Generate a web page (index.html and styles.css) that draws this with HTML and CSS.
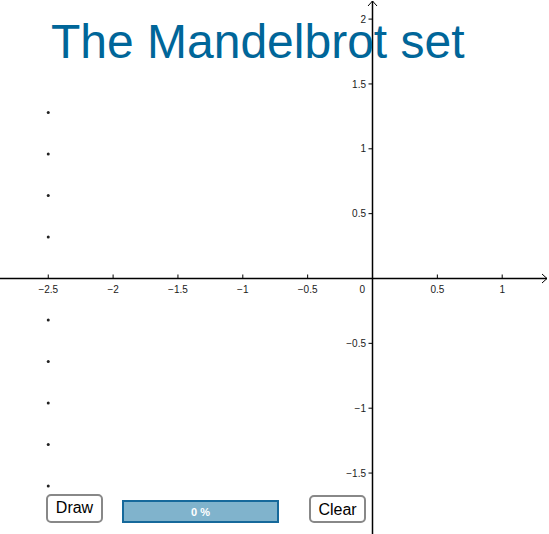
FILE: index.html
```html
<!DOCTYPE html>
<html>
<head>
<meta charset="utf-8">
<title>The Mandelbrot set</title>
<link rel="stylesheet" href="styles.css">
</head>
<body>
<div class="canvas">
  <svg class="graph" width="549" height="534" viewBox="0 0 549 534" xmlns="http://www.w3.org/2000/svg">
    <g class="axis" stroke="#000" stroke-width="1.5" fill="none">
      <line x1="0" y1="278.5" x2="547" y2="278.5"/>
      <polyline points="542,274 547,278.5 542,283" stroke-width="1"/>
      <line x1="372.5" y1="534" x2="372.5" y2="1"/>
      <polyline points="368,6 372.5,1 377,6" stroke-width="1"/>
    </g>
    <g class="ticks" stroke="#000" stroke-width="1">
      <line x1="48.25" y1="274.5" x2="48.25" y2="278.5"/>
      <line x1="113.1" y1="274.5" x2="113.1" y2="278.5"/>
      <line x1="177.95" y1="274.5" x2="177.95" y2="278.5"/>
      <line x1="242.8" y1="274.5" x2="242.8" y2="278.5"/>
      <line x1="307.65" y1="274.5" x2="307.65" y2="278.5"/>
      <line x1="437.35" y1="274.5" x2="437.35" y2="278.5"/>
      <line x1="502.2" y1="274.5" x2="502.2" y2="278.5"/>
      <line x1="368.5" y1="19.1" x2="372.5" y2="19.1"/>
      <line x1="368.5" y1="83.95" x2="372.5" y2="83.95"/>
      <line x1="368.5" y1="148.8" x2="372.5" y2="148.8"/>
      <line x1="368.5" y1="213.65" x2="372.5" y2="213.65"/>
      <line x1="368.5" y1="343.35" x2="372.5" y2="343.35"/>
      <line x1="368.5" y1="408.2" x2="372.5" y2="408.2"/>
      <line x1="368.5" y1="473.05" x2="372.5" y2="473.05"/>
    </g>
    <g class="xlabels" text-anchor="middle">
      <text x="48.25" y="292.5">−2.5</text>
      <text x="113.1" y="292.5">−2</text>
      <text x="177.95" y="292.5">−1.5</text>
      <text x="242.8" y="292.5">−1</text>
      <text x="307.65" y="292.5">−0.5</text>
      <text x="437.35" y="292.5">0.5</text>
      <text x="502.2" y="292.5">1</text>
    </g>
    <g class="ylabels" text-anchor="end">
      <text x="366" y="22.6">2</text>
      <text x="366" y="87.5">1.5</text>
      <text x="366" y="152.3">1</text>
      <text x="366" y="217.2">0.5</text>
      <text x="365" y="292.5">0</text>
      <text x="366" y="346.9">−0.5</text>
      <text x="366" y="411.7">−1</text>
      <text x="366" y="476.6">−1.5</text>
    </g>
    <g class="points" fill="#222">
      <circle cx="48.25" cy="112.5" r="1.5"/>
      <circle cx="48.25" cy="154" r="1.5"/>
      <circle cx="48.25" cy="195.5" r="1.5"/>
      <circle cx="48.25" cy="237" r="1.5"/>
      <circle cx="48.25" cy="320" r="1.5"/>
      <circle cx="48.25" cy="361.5" r="1.5"/>
      <circle cx="48.25" cy="403" r="1.5"/>
      <circle cx="48.25" cy="444.5" r="1.5"/>
      <circle cx="48.25" cy="486" r="1.5"/>
    </g>
  </svg>
  <h1 class="title">The Mandelbrot set</h1>
  <button class="btn btn-draw">Draw</button>
  <div class="progress"><span class="progress-label">0 %</span></div>
  <button class="btn btn-clear">Clear</button>
</div>
</body>
</html>
```
FILE: styles.css
```css
html, body {
  margin: 0;
  padding: 0;
  background: #fff;
}

.canvas {
  position: relative;
  width: 549px;
  height: 534px;
  overflow: hidden;
  font-family: "Liberation Sans", Arial, sans-serif;
}

.graph {
  position: absolute;
  left: 0;
  top: 0;
  display: block;
}

.graph text {
  font-family: "Liberation Sans", Arial, sans-serif;
  font-size: 10px;
  fill: #1a1a1a;
}

.title {
  position: absolute;
  left: 51px;
  top: 18px;
  margin: 0;
  font-family: "Liberation Sans", Arial, sans-serif;
  font-size: 48px;
  line-height: 48px;
  font-weight: normal;
  color: #006699;
  white-space: nowrap;
}

.btn {
  position: absolute;
  box-sizing: border-box;
  display: flex;
  align-items: center;
  justify-content: center;
  padding: 0;
  background: #fff;
  border: 2px solid #888;
  border-radius: 5px;
  font-family: "Liberation Sans", Arial, sans-serif;
  font-size: 16px;
  color: #000;
}

.btn-draw {
  left: 46px;
  top: 494px;
  width: 57px;
  height: 29px;
  padding-bottom: 1px;
}

.btn-clear {
  left: 309px;
  top: 495px;
  width: 57px;
  height: 28px;
  padding-top: 2px;
}

.progress {
  position: absolute;
  left: 122px;
  top: 500px;
  width: 157px;
  height: 23px;
  box-sizing: border-box;
  border: 2px solid #16699b;
  background: #80b3cc;
  display: flex;
  align-items: center;
  justify-content: center;
}

.progress-label {
  color: #fff;
  font-weight: bold;
  font-size: 11px;
}
```
